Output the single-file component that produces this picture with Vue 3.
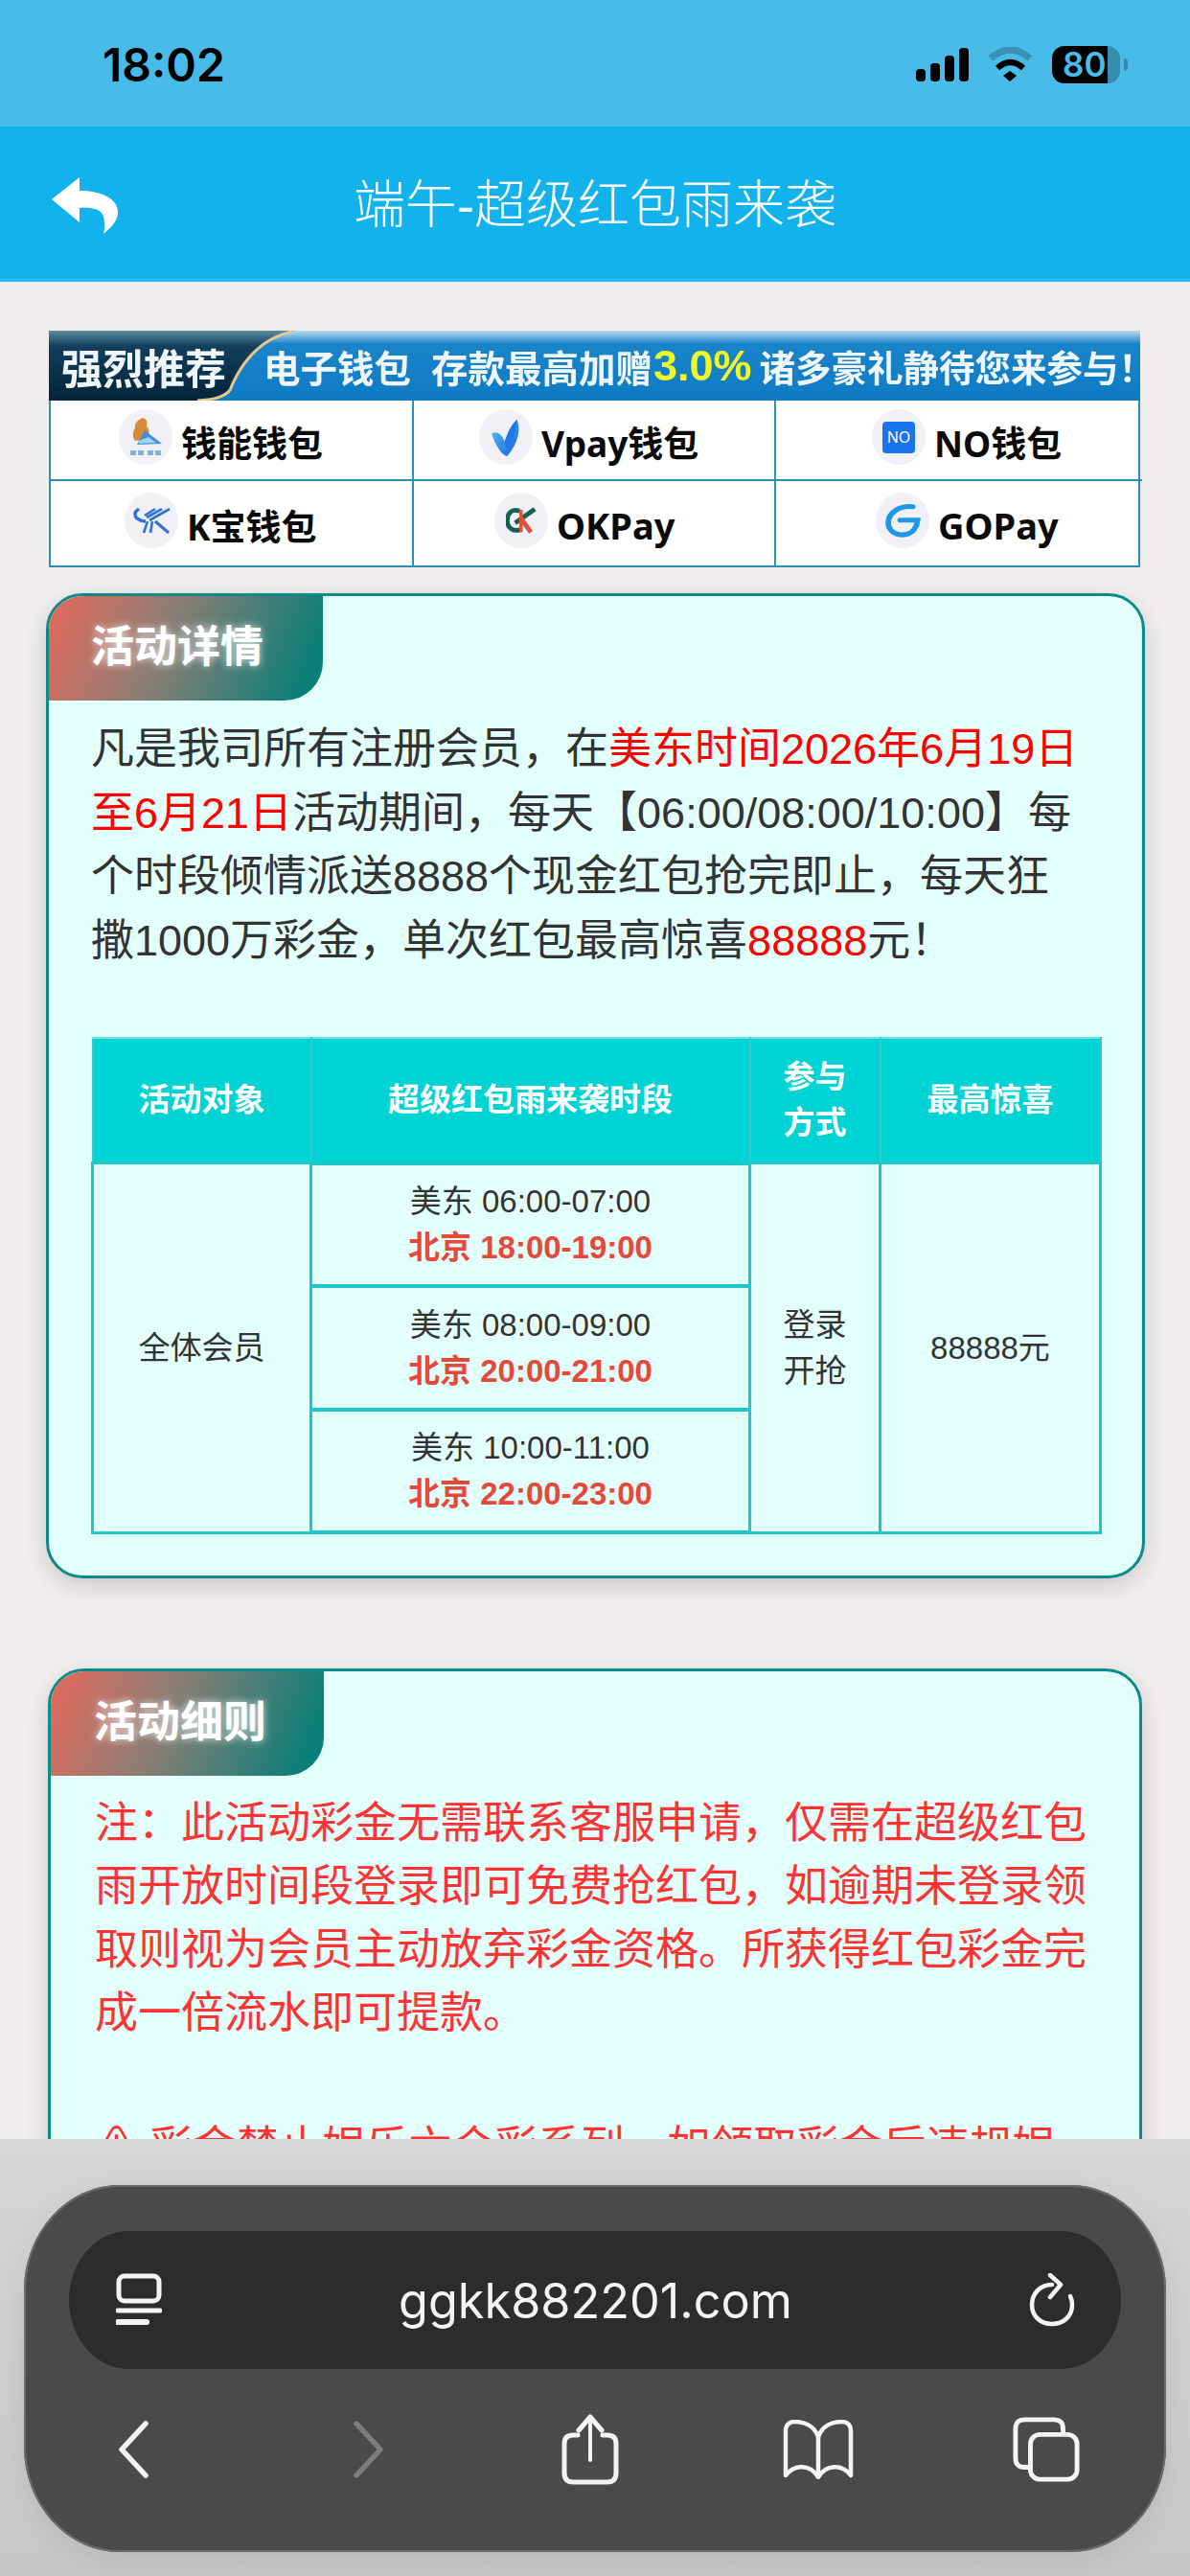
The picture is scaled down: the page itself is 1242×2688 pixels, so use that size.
<script setup>
const wallets = [
  { name: '钱能钱包', logo: 'qn', cls: 'w1' },
  { name: 'Vpay钱包', logo: 'vp', cls: 'w2' },
  { name: 'NO钱包', logo: 'no', cls: 'w3' },
  { name: 'K宝钱包', logo: 'kb', cls: 'w4' },
  { name: 'OKPay', logo: 'ok', cls: 'w5' },
  { name: 'GOPay', logo: 'go', cls: 'w6' },
]

const slots = [
  { us: '美东 06:00-07:00', bj: '北京 18:00-19:00' },
  { us: '美东 08:00-09:00', bj: '北京 20:00-21:00' },
  { us: '美东 10:00-11:00', bj: '北京 22:00-23:00' },
]
</script>

<template>
  <div class="page">
    <div class="status">
      <span class="time">18:02</span>
      <div class="status-icons">
        <svg width="55" height="35" viewBox="0 0 55 35">
          <rect x="0" y="22" width="10" height="13" rx="4" />
          <rect x="15" y="16" width="10" height="19" rx="4" />
          <rect x="30" y="8" width="10" height="27" rx="4" />
          <rect x="45" y="0" width="10" height="35" rx="4" />
        </svg>
        <svg width="47" height="36" viewBox="0 0 47 36">
          <path d="M3 12 Q23.5 -6 44 12" fill="none" stroke="#000" stroke-opacity=".22" stroke-width="7" />
          <path d="M10 22 Q23.5 10 37 22" fill="none" stroke="#000" stroke-width="6" />
          <path d="M16 30 L23 25 L30 30 L23 36 Z" />
        </svg>
        <div class="battery">
          <span class="batt-level">80</span>
          <span class="batt-cap"></span>
        </div>
      </div>
    </div>

    <div class="nav">
      <svg class="back" width="70" height="60" viewBox="54 185 70 60">
        <path d="M83 185 L54 208 L83 232 V217 C95 216 106 218 108 226 C110 234 109 240 108 244 C118 236 124 228 123 220 C122 207 105 199 83 199 Z" fill="#fff" />
      </svg>
      <span class="nav-title">端午-超级红包雨来袭</span>
    </div>

    <div class="promo">
      <div class="promo-head">
        <svg class="promo-swoosh" width="1139" height="73" viewBox="0 0 1139 73">
          <defs>
            <linearGradient id="darkfill" x1="0" y1="0" x2="0" y2="1">
              <stop offset="0" stop-color="#5d8ba0" />
              <stop offset=".22" stop-color="#123f5c" />
              <stop offset="1" stop-color="#052438" />
            </linearGradient>
          </defs>
          <path d="M0 0 H257 C225 6 205 25 190 60 C185 68 170 72 155 73 H0 Z" fill="url(#darkfill)" />
          <path d="M254 1 C222 8 202 30 189 62 C183 70 170 72 155 73" fill="none" stroke="#e9c88c" stroke-width="3" />
        </svg>
        <span class="p-strong">强烈推荐</span>
        <span class="p-a">电子钱包</span>
        <span class="p-b">存款最高加赠</span>
        <span class="p-num">3.0%</span>
        <span class="p-c">诸多豪礼静待您来参与！</span>
      </div>
      <div class="wallets">
        <div v-for="w in wallets" :key="w.name" class="wallet" :class="w.cls">
          <span class="logo">
            <svg v-if="w.logo === 'qn'" width="35" height="40" viewBox="0 0 35 40">
              <path d="M14 0 C20 2 18 6 18 9 C22 12 21 20 18 23 L6 24 C3 20 3 14 6 11 C5 7 8 2 14 0 Z" fill="#d98a36" />
              <path d="M16 13 L34 27 L8 28 Z" fill="#3f8fd6" />
              <path d="M10 24 L20 20 L28 26 L10 27 Z" fill="#9fd4f4" />
              <path d="M1 34 H7 V39 H1 Z M9 34 H15 V39 H9 Z M19 34 H25 V39 H19 Z M27 34 H33 V39 H27 Z" fill="#5a9fd0" opacity=".75" />
            </svg>
            <svg v-else-if="w.logo === 'vp'" width="35" height="39" viewBox="0 0 38 46">
              <defs>
                <linearGradient id="vpfill" x1="0" y1="0" x2="1" y2="1">
                  <stop offset="0" stop-color="#5cc4f5" />
                  <stop offset="1" stop-color="#1560d8" />
                </linearGradient>
              </defs>
              <path d="M1 18 C8 14 14 20 17 28 C20 20 23 10 32 1 C37 12 34 30 20 46 C13 45 4 30 1 18 Z" fill="url(#vpfill)" />
              <path d="M17 28 C20 20 23 10 32 1 C31 14 27 26 20 38 Z" fill="#1f78e6" />
            </svg>
            <span v-else-if="w.logo === 'no'" class="no-mark">NO</span>
            <svg v-else-if="w.logo === 'kb'" width="39" height="27" viewBox="0 0 39 27" fill="none" stroke="#2f72d8" stroke-width="2.6">
              <path d="M6 1 C1 4 1 8 4 11 C7 13 10 14 13 14" stroke-width="3.4" />
              <path d="M38 1 L17 13" />
              <path d="M30 1 L14 10" />
              <path d="M23 1 L12 8" />
              <path d="M11 26 L15 14" />
              <path d="M18 26 L20 14" />
              <path d="M23 14 L37 26" stroke-width="3.2" />
            </svg>
            <svg v-else-if="w.logo === 'ok'" width="33" height="28" viewBox="0 0 48 40" fill="none" stroke-width="7">
              <path d="M21 6 C8 1 2 11 2 20 C2 31 11 38 22 34" stroke="#17614f" />
              <path d="M44 3 L14 24" stroke="#17614f" />
              <path d="M22 16 L38 38" stroke="#e0503e" />
              <path d="M23 4 L23 38" stroke="#e0503e" stroke-width="5" />
            </svg>
            <svg v-else width="38" height="37" viewBox="0 0 46 50" preserveAspectRatio="none" fill="none" stroke-linecap="round">
              <path d="M36 5 C18 3 6 14 5 26 C4 40 16 47 28 44 C36 42 41 34 42 24 L20 24" stroke="#1d97ea" stroke-width="7" />
            </svg>
          </span>
          <span class="wallet-name">{{ w.name }}</span>
        </div>
      </div>
    </div>

    <div class="card card-one">
      <div class="tag">活动详情</div>
      <p class="intro">
        凡是我司所有注册会员，在<b>美东时间2026年6月19日</b><br />
        <b>至6月21日</b>活动期间，每天【06:00/08:00/10:00】每<br />
        个时段倾情派送8888个现金红包抢完即止，每天狂<br />
        撒1000万彩金，单次红包最高惊喜<b>88888</b>元！
      </p>
      <table class="plan">
        <colgroup>
          <col class="c1" />
          <col class="c2" />
          <col class="c3" />
          <col class="c4" />
        </colgroup>
        <thead>
          <tr>
            <th>活动对象</th>
            <th>超级红包雨来袭时段</th>
            <th>参与<br />方式</th>
            <th>最高惊喜</th>
          </tr>
        </thead>
        <tbody>
          <tr v-for="(s, i) in slots" :key="s.us">
            <td v-if="i === 0" rowspan="3">全体会员</td>
            <td class="slot">{{ s.us }}<br /><strong>{{ s.bj }}</strong></td>
            <td v-if="i === 0" rowspan="3">登录<br />开抢</td>
            <td v-if="i === 0" rowspan="3">88888元</td>
          </tr>
        </tbody>
      </table>
    </div>

    <div class="card card-two">
      <div class="tag">活动细则</div>
      <p class="rule">
        注：此活动彩金无需联系客服申请，仅需在超级红包<br />
        雨开放时间段登录即可免费抢红包，如逾期未登录领<br />
        取则视为会员主动放弃彩金资格。所获得红包彩金完<br />
        成一倍流水即可提款。
      </p>
      <p class="rule warn">⚠ 彩金禁止娱乐六合彩系列，如领取彩金后违规娱</p>
    </div>

    <div class="safari">
      <div class="panel">
        <div class="urlbar">
          <svg width="48" height="56" viewBox="0 0 48 56" fill="none" stroke="#f4f4f4" stroke-width="5">
            <rect x="3" y="3" width="42" height="26" rx="6" />
            <path d="M2 39 H46" stroke-linecap="round" />
            <path d="M2 51 H32" stroke-width="6" stroke-linecap="round" />
          </svg>
          <span class="url">ggkk882201.com</span>
          <svg width="48" height="56" viewBox="0 0 48 56" fill="none" stroke="#f4f4f4" stroke-width="4.5" stroke-linejoin="round" stroke-linecap="round">
            <path d="M24 12 C11 12 3 22 3 33 C3 45 12 53 24 53 C36 53 45 45 45 33 C45 29 44 26 43 24" />
            <path d="M22 2 L33 12 L22 25" />
          </svg>
        </div>
        <div class="tools">
          <div class="tool">
            <svg width="36" height="62" viewBox="0 0 36 62" fill="none" stroke="#f4f4f4" stroke-width="5.5" stroke-linecap="round" stroke-linejoin="round">
              <path d="M30 4 L5 31 L30 58" />
            </svg>
          </div>
          <div class="tool tool-fwd">
            <svg width="36" height="62" viewBox="0 0 36 62" fill="none" stroke="#7c7c80" stroke-width="5.5" stroke-linecap="round" stroke-linejoin="round">
              <path d="M6 4 L31 31 L6 58" />
            </svg>
          </div>
          <div class="tool">
            <svg width="60" height="74" viewBox="0 0 60 74" fill="none" stroke="#f4f4f4" stroke-width="5" stroke-linecap="round" stroke-linejoin="round">
              <path d="M17 22 H12 C6 22 3 25 3 31 V61 C3 68 6 71 12 71 H48 C54 71 57 68 57 61 V31 C57 25 54 22 48 22 H43" />
              <path d="M30 4 V48" stroke-width="4" />
              <path d="M18 17 L30 3 L42 17" />
            </svg>
          </div>
          <div class="tool">
            <svg width="74" height="62" viewBox="0 0 74 62" fill="none" stroke="#f4f4f4" stroke-width="4.5" stroke-linejoin="round">
              <path d="M37 18 C33 6 22 2 12 2 C6 2 3 6 3 12 V58 C12 46 29 46 37 60 C45 46 62 46 71 58 V12 C71 6 68 2 62 2 C52 2 41 6 37 18 Z" />
              <path d="M37 18 V58" />
            </svg>
          </div>
          <div class="tool">
            <svg width="70" height="70" viewBox="0 0 72 70" fill="none" stroke="#f4f4f4" stroke-width="5">
              <path d="M19 54 H13 C6 54 3 51 3 44 V13 C3 6 6 3 13 3 H44 C51 3 54 6 54 13 V19" />
              <rect x="19" y="19" width="50" height="48" rx="10" />
            </svg>
          </div>
        </div>
      </div>
    </div>
  </div>
</template>

<style scoped>
.page {
  position: relative;
  width: 1242px;
  height: 2688px;
  overflow: hidden;
  background: #f2eeed;
  font-family: "Liberation Sans", "Noto Sans CJK SC", sans-serif;
  color: #333;
}

.status {
  height: 132px;
  background: #49bbe9;
  display: flex;
  justify-content: space-between;
  align-items: center;
  padding: 2px 64px 0 107px;
  box-sizing: border-box;
}
.time {
  font-family: Inter, sans-serif;
  font-size: 48px;
  font-weight: 600;
  color: #000;
}
.status-icons {
  display: flex;
  align-items: center;
  gap: 20px;
}
.battery {
  position: relative;
  width: 71px;
  height: 39px;
  margin-right: 9px;
  border-radius: 13px;
  background: rgba(0, 0, 0, 0.25);
}
.batt-level {
  display: block;
  width: 58px;
  height: 39px;
  box-sizing: border-box;
  padding-left: 11px;
  border-radius: 13px 0 0 13px;
  background: #000;
  font-family: Inter, sans-serif;
  font-size: 35px;
  font-weight: 600;
  line-height: 39px;
  color: #49bbe9;
}
.batt-cap {
  position: absolute;
  left: 75px;
  top: 13px;
  width: 4px;
  height: 13px;
  border-radius: 0 4px 4px 0;
  background: rgba(0, 0, 0, 0.25);
}

.nav {
  height: 162px;
  box-sizing: border-box;
  background: #12b2ec;
  border-bottom: 3px solid #22bdf2;
  position: relative;
  display: flex;
  align-items: center;
  justify-content: center;
  padding-bottom: 5px;
}
.back {
  position: absolute;
  left: 54px;
  top: 53px;
}
.nav-title {
  font-size: 54px;
  color: #fff;
  font-weight: 300;
}

.promo {
  width: 1139px;
  margin: 51px 0 0 51px;
}
.promo-head {
  position: relative;
  height: 73px;
  display: flex;
  align-items: center;
  padding-left: 13px;
  box-sizing: border-box;
  background: linear-gradient(#bcdcf2 0, #1a84ca 14px, #0e7bc3 100%);
  font-weight: 700;
  font-size: 38.5px;
  color: #eef6fb;
  white-space: nowrap;
}
.promo-head span {
  position: relative;
  filter: blur(0.5px);
}
.promo-swoosh {
  position: absolute;
  left: 0;
  top: 0;
}
.p-strong {
  font-size: 43px;
  margin-right: 39px;
}
.p-a {
  margin-right: 21px;
}
.p-num {
  font-size: 45px;
  color: #eef72a;
  margin: 0 8px 0 1px;
}
.p-c {
  font-size: 37.5px;
}

.wallets {
  display: grid;
  grid-template-columns: 379px 378px 382px;
  grid-template-rows: 84px 88px;
  border: 2px solid #2b8fb5;
  border-top: 0;
  box-sizing: border-box;
  background: #fff;
  height: 174px;
}
.wallet {
  display: flex;
  align-items: center;
  gap: 9px;
  box-sizing: border-box;
  border-right: 2px solid #2b8fb5;
  font-family: "Noto Sans", "Noto Sans CJK SC", sans-serif;
  font-weight: 700;
  font-size: 37px;
  color: #0a0a0a;
}
.wallet:nth-child(3n) {
  border-right: 0;
}
.wallet:nth-child(-n+3) {
  border-bottom: 2px solid #2b8fb5;
}
.w1 { padding-left: 71px; }
.w2 { padding-left: 68px; }
.w3 { padding-left: 100px; }
.w4 { padding-left: 77px; }
.w5 { padding-left: 84px; font-size: 38px; }
.w6 { padding-left: 104px; font-size: 38px; }
.logo {
  width: 56px;
  height: 58px;
  flex: none;
  border-radius: 50%;
  background: #f0f0f6;
  display: flex;
  align-items: center;
  justify-content: center;
  position: relative;
  top: -3px;
}
.wallet-name {
  position: relative;
  top: 2px;
}
.no-mark {
  width: 34px;
  height: 33px;
  border-radius: 4px;
  background: #1a73ee;
  color: #fff;
  font-size: 16px;
  line-height: 33px;
  text-align: center;
  font-weight: 400;
}

.card {
  box-sizing: border-box;
  background: #e3fffb;
  border: 3px solid #0b8b88;
  border-radius: 38px;
  box-shadow: 0 8px 26px rgba(0, 0, 0, 0.16);
  overflow: hidden;
}
.card-one {
  margin: 27px 0 0 48px;
  width: 1147px;
  height: 1028px;
}
.card-two {
  margin: 94px 0 0 50px;
  width: 1142px;
  height: 700px;
}
.tag {
  height: 109px;
  box-sizing: border-box;
  background: linear-gradient(112deg, #d96c5e 6%, #8a7d75 42%, #0a7f78 92%);
  border-bottom-right-radius: 40px;
  color: #fff;
  font-size: 45px;
  font-weight: 700;
  line-height: 108px;
  text-shadow: 0 0 9px rgba(255, 255, 255, 0.8);
}
.card-one .tag {
  width: 286px;
  padding-left: 44px;
}
.card-two .tag {
  width: 285px;
  padding-left: 45px;
}
.intro {
  margin: 18px 0 0 44px;
  font-size: 45px;
  line-height: 66.7px;
}
.intro b {
  font-weight: 400;
  color: #ff0000;
}

.plan {
  margin: 66px 0 0 44px;
  width: 1052px;
  table-layout: fixed;
  border-collapse: collapse;
  font-size: 33px;
  line-height: 48px;
  text-align: center;
}
.c1 { width: 228px; }
.c2 { width: 458px; }
.c3 { width: 136px; }
.c4 { width: 230px; }
.plan th {
  height: 128px;
  padding: 0;
  background: #00d3d3;
  color: #fff;
  font-weight: 700;
  border: 2px solid #3cc6c6;
  border-top-color: #6fe2e0;
  border-bottom: 3px solid #1cc8cb;
}
.plan td {
  padding: 0;
  border: 3px solid #1cc8cb;
}
.plan .slot {
  height: 124.5px;
  border-width: 4px 3px;
}
.plan strong {
  color: #e8483a;
  font-weight: 700;
}

.rule {
  margin: 17px 0 0 46px;
  font-size: 45px;
  line-height: 66px;
  color: #ff3333;
  white-space: nowrap;
}
.warn {
  margin-top: 74px;
}

.safari {
  position: absolute;
  left: 0;
  top: 2232px;
  width: 1242px;
  height: 456px;
  box-sizing: border-box;
  padding: 48px 25px 0;
  background: linear-gradient(#d7d7d7, #c6c6c6);
}
.panel {
  height: 383px;
  box-sizing: border-box;
  padding: 48px 47px 0;
  background: #4a4a4a;
  border-radius: 100px / 110px;
  box-shadow: inset 0 0 0 2px #6b6b6b, 0 6px 30px rgba(0, 0, 0, 0.08);
}
.urlbar {
  height: 144px;
  background: #2c2c2c;
  border-radius: 62px / 72px;
  display: flex;
  align-items: center;
  justify-content: space-between;
  padding: 0 48px 0 49px;
  box-sizing: border-box;
}
.url {
  font-family: Inter, sans-serif;
  font-size: 50.4px;
  color: #f4f4f4;
}
.tools {
  display: grid;
  grid-template-columns: repeat(5, 238px);
  margin: 44px 0 0 -51px;
  height: 80px;
}
.tool {
  display: flex;
  align-items: center;
  justify-content: center;
}
.tool-fwd {
  padding-left: 12px;
}
</style>

<style>
html, body {
  margin: 0;
  background: #f2eeed;
}
</style>
